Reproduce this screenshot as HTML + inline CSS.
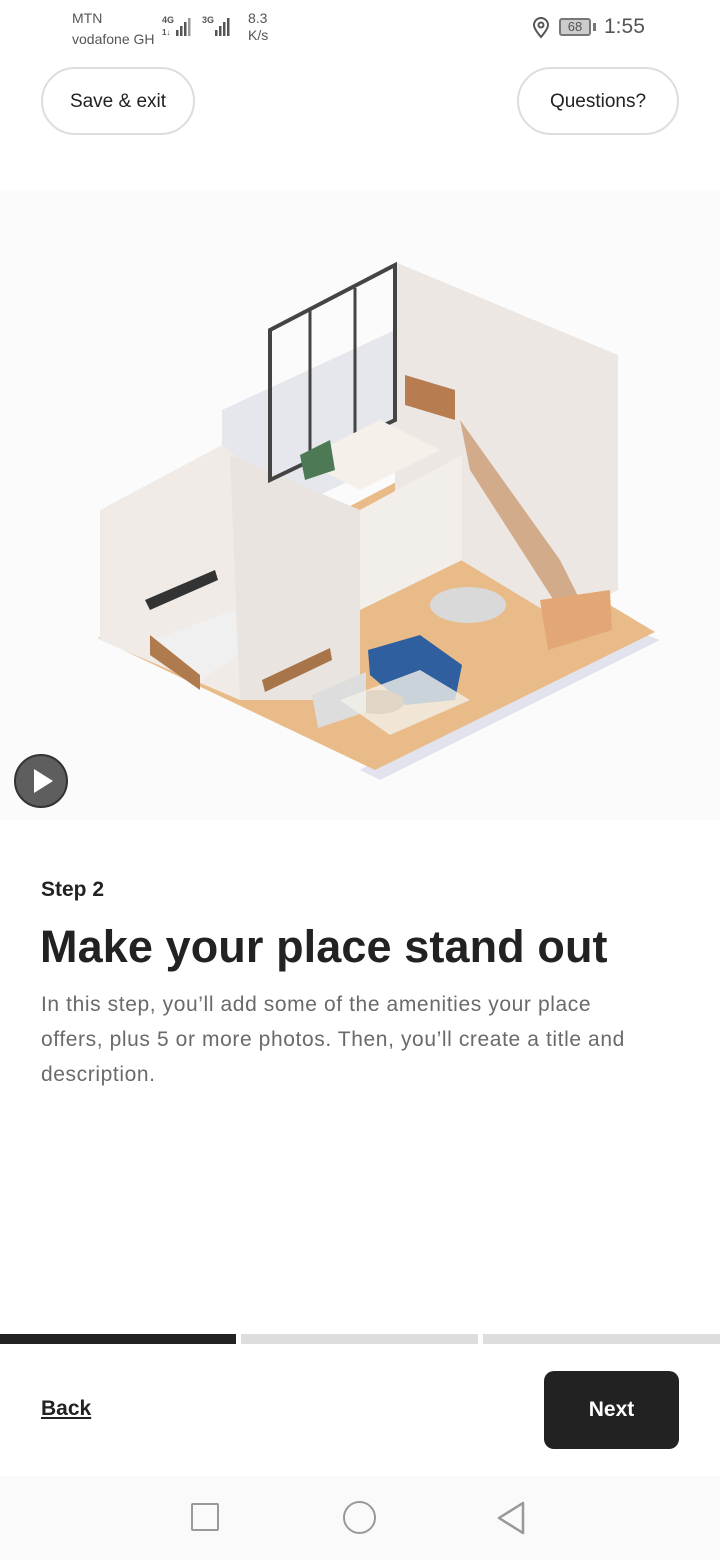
<!DOCTYPE html>
<html><head><meta charset="utf-8"><style>
body{margin:0;width:720px;height:1560px;background:#fff;font-family:"Liberation Sans",sans-serif;position:relative;overflow:hidden;color:#222}
.a{position:absolute}
.pill{position:absolute;border:2px solid #ddd;border-radius:34px;height:68px;box-sizing:border-box;display:flex;align-items:center;justify-content:center;font-size:19px;color:#222;background:#fff;padding-top:2px}
</style></head><body>
<div class="a" style="left:72px;top:8px;font-size:14px;color:#555;line-height:21px">MTN<br>vodafone GH</div>
<svg class="a" style="left:160px;top:14px" width="80" height="26"><text x="2" y="9" font-size="9" font-weight="bold" fill="#555" font-family="Liberation Sans">4G</text><text x="2" y="21" font-size="8" font-weight="bold" fill="#555" font-family="Liberation Sans">1↓</text><rect x="16" y="16" width="2.5" height="6" fill="#555"/><rect x="20" y="12" width="2.5" height="10" fill="#555"/><rect x="24" y="8" width="2.5" height="14" fill="#555"/><rect x="28" y="4" width="2.5" height="18" fill="#999"/><text x="42" y="9" font-size="9" font-weight="bold" fill="#555" font-family="Liberation Sans">3G</text><rect x="55" y="16" width="2.5" height="6" fill="#555"/><rect x="59" y="12" width="2.5" height="10" fill="#555"/><rect x="63" y="8" width="2.5" height="14" fill="#555"/><rect x="67" y="4" width="2.5" height="18" fill="#555"/></svg>
<div class="a" style="left:248px;top:10px;font-size:14px;color:#555;line-height:17px">8.3<br>K/s</div>
<svg class="a" style="left:531px;top:17px" width="20" height="22" viewBox="0 0 20 22"><path d="M10 20 C4 13 3 10 3 8 a7 7 0 0 1 14 0 c0 2 -1 5 -7 12z" fill="none" stroke="#555" stroke-width="2"/><circle cx="10" cy="8" r="2.5" fill="none" stroke="#555" stroke-width="2"/></svg>
<div class="a" style="left:559px;top:18px;width:32px;height:18px;border:2px solid #777;border-radius:3px;box-sizing:border-box;background:#ccc;font-size:13px;text-align:center;line-height:14px;color:#555">68</div>
<div class="a" style="left:593px;top:23px;width:3px;height:8px;background:#777"></div>
<div class="a" style="left:604px;top:15px;font-size:21px;color:#555">1:55</div>
<div class="pill" style="left:41px;top:67px;width:154px">Save &amp; exit</div>
<div class="pill" style="left:517px;top:67px;width:162px">Questions?</div>
<div class="a" style="left:0;top:190px;width:720px;height:630px;background:#fbfbfb"></div>
<svg class="a" style="left:0;top:190px" width="720" height="630" viewBox="0 190 720 630">
<polygon points="380,780 660,640 620,625 360,770" fill="#e3e3ee"/>
<polygon points="98,638 400,480 655,632 375,770" fill="#e8bb88"/>
<polygon points="395,262 618,355 618,590 560,620 395,520" fill="#ece7e3"/>
<polygon points="222,410 395,330 395,460 222,540" fill="#d8d8e4" opacity=".6"/>
<polygon points="100,510 222,445 240,460 240,700 100,640" fill="#f0ebe7"/>
<polygon points="230,455 360,510 360,700 240,700" fill="#e9e4df"/>
<polygon points="360,510 462,455 462,560 360,610" fill="#f2eeea"/>
<polygon points="270,330 395,265 395,420 270,480" fill="none" stroke="#444" stroke-width="4"/>
<line x1="310" y1="310" x2="310" y2="460" stroke="#444" stroke-width="3"/><line x1="355" y1="288" x2="355" y2="440" stroke="#444" stroke-width="3"/>
<polygon points="300,460 380,420 440,450 360,490" fill="#f5f1ea"/>
<polygon points="300,455 330,440 335,470 305,480" fill="#4d7a55"/>
<polygon points="405,375 455,390 455,420 405,405" fill="#b77c4f"/>
<polygon points="460,420 560,560 580,600 560,610 470,470" fill="#c89264" opacity=".7"/>
<polygon points="540,600 610,590 612,630 548,650" fill="#e2a774"/>
<ellipse cx="468" cy="605" rx="38" ry="18" fill="#d9d9d9"/>
<polygon points="368,650 420,635 462,665 455,700 405,705 370,675" fill="#2f5f9e"/>
<ellipse cx="378" cy="702" rx="26" ry="12" fill="#9a6a3f"/>
<polygon points="145,600 215,570 218,580 150,610" fill="#333"/>
<polygon points="152,640 235,610 238,655 200,680 155,660" fill="#f0f0f0"/>
<polygon points="150,635 200,675 200,690 150,655" fill="#b07a4f"/>
<polygon points="262,680 330,648 332,660 265,692" fill="#a8744a"/>
<polygon points="312,695 366,672 366,712 318,728" fill="#ddd"/>
<polygon points="340,700 420,670 470,700 390,735" fill="#f3f0e8" opacity=".8"/>
</svg>
<svg class="a" style="left:13px;top:753px" width="56" height="56"><circle cx="28" cy="28" r="26" fill="#5e5e5e" stroke="#333" stroke-width="2"/><polygon points="21,16 21,40 40,28" fill="#fff"/></svg>
<div class="a" style="left:41px;top:878px;font-size:21px;font-weight:bold;color:#222">Step 2</div>
<div class="a" style="left:40px;top:921px;font-size:45px;font-weight:bold;color:#222;letter-spacing:0.1px">Make your place stand out</div>
<div class="a" style="left:41px;top:987px;width:615px;font-size:21px;line-height:35px;color:#6a6a6a;letter-spacing:0.6px">In this step, you’ll add some of the amenities your place offers, plus 5 or more photos. Then, you’ll create a title and description.</div>
<div class="a" style="left:0;top:1334px;width:236px;height:10px;background:#222"></div>
<div class="a" style="left:241px;top:1334px;width:237px;height:10px;background:#ddd"></div>
<div class="a" style="left:483px;top:1334px;width:237px;height:10px;background:#ddd"></div>
<div class="a" style="left:41px;top:1397px;font-size:21px;font-weight:bold;text-decoration:underline">Back</div>
<div class="a" style="left:544px;top:1371px;width:135px;height:78px;background:#222;border-radius:10px;color:#fff;font-size:21px;font-weight:bold;display:flex;align-items:center;justify-content:center">Next</div>
<div class="a" style="left:0;top:1476px;width:720px;height:84px;background:#fafafa"></div>
<div class="a" style="left:191px;top:1503px;width:28px;height:28px;border:2.5px solid #999;box-sizing:border-box;border-radius:2px"></div>
<div class="a" style="left:343px;top:1501px;width:33px;height:33px;border:2.5px solid #999;box-sizing:border-box;border-radius:50%"></div>
<svg class="a" style="left:495px;top:1500px" width="32" height="36"><polygon points="28,3 28,33 4,18" fill="none" stroke="#999" stroke-width="2.5" stroke-linejoin="round"/></svg>
</body></html>
